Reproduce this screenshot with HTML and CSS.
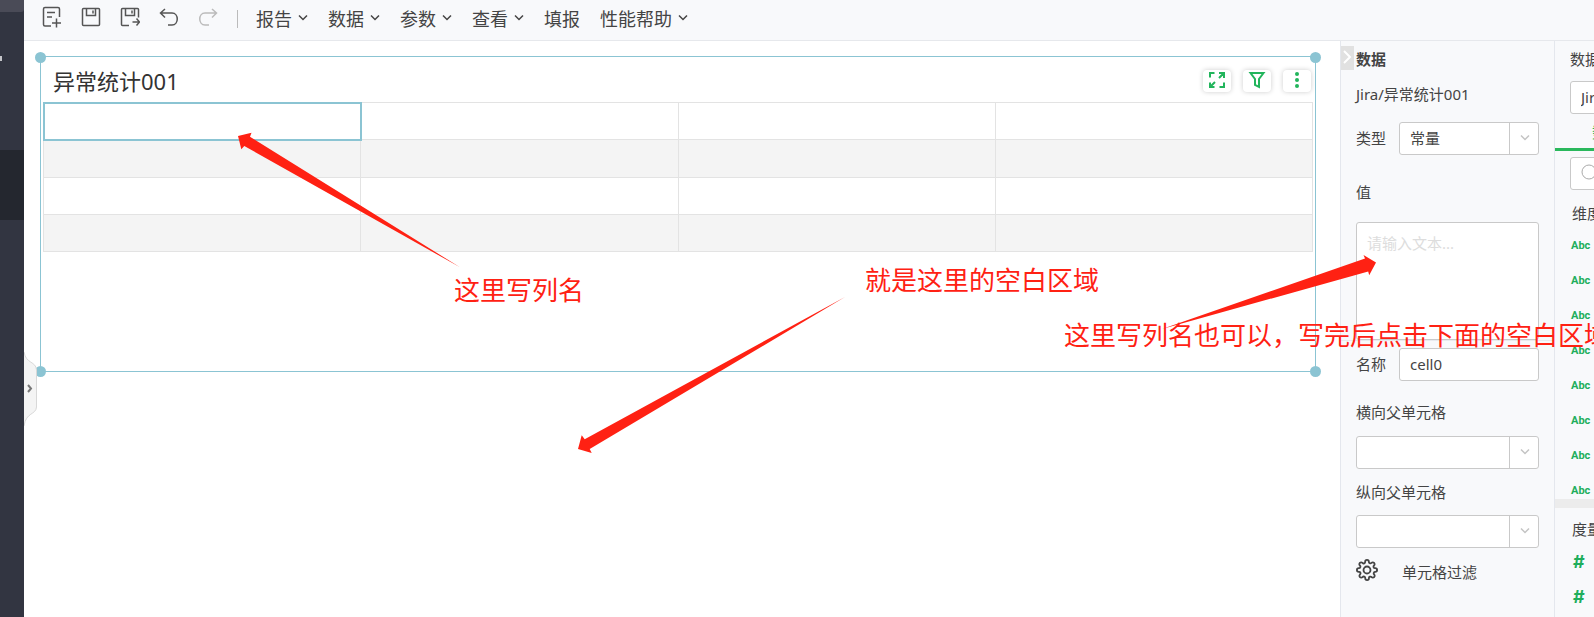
FILE: index.html
```html
<!DOCTYPE html>
<html lang="zh-CN">
  <head>
  <meta charset="utf-8">
  <title>异常统计001</title>
  <link rel="stylesheet" href="styles.css">
  </head>

  <body>
  <nav class="sidebar">
    <div class="sidebar-top"></div>
    <div class="sidebar-mark"></div>
    <div class="sidebar-active"></div>
  </nav>

  <div class="main">
    <header class="toolbar">
      <div class="tools">
        <button class="tool" aria-label="新建">
          <svg width="20" height="22" viewBox="0 0 20 22"><path d="M17.500 11V3q0-1.500-1.500-1.500H3Q1.500 1.500 1.500 3v15.500Q1.500 20 3 20H9M5 6.500h8M5 11h5M14.500 12.500v9M10 17h9"/></svg>
        </button>
        <button class="tool" aria-label="保存">
          <svg width="20" height="22" viewBox="0 0 20 22"><path d="M2.500 2.500h15q1 0 1 1v15q0 1-1 1h-15q-1 0-1-1v-15q0-1 1-1zM5.500 2.500v7h9v-7M12 4.500v3"/></svg>
        </button>
        <button class="tool" aria-label="另存为">
          <svg width="20" height="22" viewBox="0 0 20 22"><path d="M9 19.500H2.500q-1 0-1-1v-15q0-1 1-1h15q1 0 1 1v8M5.500 2.500v7h9v-7M12 4.500v3M12.500 16h7M16.500 12.500l3 3.500-3 3.500"/></svg>
        </button>
        <button class="tool" aria-label="撤销">
          <svg width="20" height="22" viewBox="0 0 20 22"><path d="M6 3L1.500 7 6 11.500M1.500 7H13c7 0 7 12 0 12H9"/></svg>
        </button>
        <button class="tool disabled" aria-label="重做">
          <svg width="20" height="22" viewBox="0 0 20 22"><path d="M14 3l4.500 4L14 11.500M18.500 7H7C0 7 0 19 7 19h4"/></svg>
        </button>
      </div>
      <div class="menus">
        <button class="menu">报告<svg class="caret" width="10" height="8" viewBox="0 0 10 8"><path d="M1 1.500l4 4 4-4"/></svg></button>
        <button class="menu">数据<svg class="caret" width="10" height="8" viewBox="0 0 10 8"><path d="M1 1.500l4 4 4-4"/></svg></button>
        <button class="menu">参数<svg class="caret" width="10" height="8" viewBox="0 0 10 8"><path d="M1 1.500l4 4 4-4"/></svg></button>
        <button class="menu">查看<svg class="caret" width="10" height="8" viewBox="0 0 10 8"><path d="M1 1.500l4 4 4-4"/></svg></button>
        <button class="menu">填报</button>
        <button class="menu">性能帮助<svg class="caret" width="10" height="8" viewBox="0 0 10 8"><path d="M1 1.500l4 4 4-4"/></svg></button>
      </div>
    </header>

    <div class="content">
      <main class="canvas">
        <section class="widget">
          <i class="handle tl"></i><i class="handle tr"></i><i class="handle bl"></i><i class="handle br"></i>
          <div class="widget-head">
            <h1>异常统计001</h1>
            <div class="actions">
              <button class="action" aria-label="全屏">
                <svg width="18" height="18" viewBox="0 0 18 18"><path d="M6.500 2H2v4.500M2 11.500V16h4.500M11.500 16H16v-4.500M11 2h5v5M16 2l-5 5M7 11l-5 5" /></svg>
              </button>
              <button class="action" aria-label="筛选">
                <svg width="18" height="18" viewBox="0 0 18 18"><path d="M2.500 2h13L11 8v8l-4-2V8z"/></svg>
              </button>
              <button class="action" aria-label="更多">
                <svg width="18" height="18" viewBox="0 0 18 18"><g class="dots"><circle cx="9" cy="3" r="2"/><circle cx="9" cy="9" r="2"/><circle cx="9" cy="15" r="2"/></g></svg>
              </button>
            </div>
          </div>
          <table class="grid">
            <tr><td class="selected"></td><td></td><td></td><td></td></tr>
            <tr><td></td><td></td><td></td><td></td></tr>
            <tr><td></td><td></td><td></td><td></td></tr>
            <tr><td></td><td></td><td></td><td></td></tr>
          </table>
        </section>
        <button class="drawer" aria-label="展开">
          <svg width="14" height="76" viewBox="0 0 14 76"><path class="shape" d="M0 1C2 13 12 10 12.500 19v37C12 64 2 61 0 75"/><path class="arrow" d="M4 34l3 3.500L4 41"/></svg>
        </button>
      </main>

      <aside class="panel props">
        <button class="collapse" aria-label="收起">
          <svg width="13" height="24" viewBox="0 0 13 24"><path d="M3 5l6 6-6 6"/></svg>
        </button>
        <h2>数据</h2>
        <p class="source">Jira/异常统计001</p>
        <div class="row">
          <label for="type">类型</label>
          <div class="select">
            <select id="type"><option>常量</option></select>
            <svg class="caret" width="10" height="8" viewBox="0 0 10 8"><path d="M1 1.500l4 4 4-4"/></svg>
          </div>
        </div>
        <label class="value-label" for="value">值</label>
        <textarea id="value" placeholder="请输入文本..."></textarea>
        <div class="row name-row">
          <label for="name">名称</label>
          <input id="name" type="text" value="cell0">
        </div>
        <label class="parent-label" for="row-parent">横向父单元格</label>
        <div class="select">
          <select id="row-parent"><option></option></select>
          <svg class="caret" width="10" height="8" viewBox="0 0 10 8"><path d="M1 1.500l4 4 4-4"/></svg>
        </div>
        <label class="parent-label second" for="col-parent">纵向父单元格</label>
        <div class="select">
          <select id="col-parent"><option></option></select>
          <svg class="caret" width="10" height="8" viewBox="0 0 10 8"><path d="M1 1.500l4 4 4-4"/></svg>
        </div>
        <button class="filter">
          <svg width="22" height="22" viewBox="0 0 24 24"><circle cx="12" cy="12" r="3.800"/><path d="M19.400 15a1.650 1.650 0 0 0 .33 1.820l.06.06a2 2 0 1 1-2.830 2.830l-.06-.06a1.650 1.650 0 0 0-2.800 1.170V21a2 2 0 0 1-4 0v-.09a1.650 1.650 0 0 0-2.900-1.180l-.06.06a2 2 0 1 1-2.830-2.830l.06-.06A1.650 1.650 0 0 0 3.090 14H3a2 2 0 0 1 0-4h.09a1.650 1.650 0 0 0 1.180-2.900l-.06-.06a2 2 0 1 1 2.830-2.830l.06.06A1.650 1.650 0 0 0 10 3.090V3a2 2 0 0 1 4 0v.09a1.650 1.650 0 0 0 2.820 1.180l.06-.06a2 2 0 1 1 2.830 2.830l-.06.06A1.650 1.650 0 0 0 20.910 10H21a2 2 0 0 1 0 4h-.09a1.650 1.650 0 0 0-1.510 1z"/></svg>
          单元格过滤
        </button>
      </aside>

      <aside class="panel dataset">
        <div class="dataset-body">
          <label class="dataset-label" for="dataset">数据集</label>
          <select id="dataset"><option>Jira</option></select>
          <div class="tab">数据</div>
          <div class="search">
            <svg width="18" height="18" viewBox="0 0 18 18"><circle cx="8" cy="8" r="7"/><path d="M13 13l4 4"/></svg>
          </div>
          <h3>维度</h3>
          <ul class="fields">
            <li>Abc</li><li>Abc</li><li>Abc</li><li>Abc</li>
            <li>Abc</li><li>Abc</li><li>Abc</li><li>Abc</li>
          </ul>
          <div class="split"></div>
          <h3>度量</h3>
          <ul class="measures"><li>#</li><li>#</li></ul>
        </div>
      </aside>
    </div>
  </div>

  <!-- red notes on top of the editor -->
  <div class="notes">
    <svg width="1594" height="617" viewBox="0 0 1594 617">
      <path d="M238 136l13.500-3.300-1.500 4L460 267.300 244.300 146l-3 3.300z"/>
      <path d="M578 449l3.700-13.700 3 4L845 297 589.700 449l2 4z"/>
      <path d="M1376 262.500l-12.500-7.400 1.500 3.400L1162 329l206.200-57.500 1 3.800z"/>
    </svg>
    <span class="note column">这里写列名</span>
    <span class="note blank">就是这里的空白区域</span>
    <span class="note input">这里写列名也可以，写完后点击下面的空白区域</span>
  </div>
  </body>
</html>
```
FILE: styles.css
```css
* {
  box-sizing: border-box;
}

body {
  margin: 0;
  display: flex;
  min-height: 100vh;
  position: relative;
  overflow: hidden;
  background: #fff;
  color: #444;
  font: 15px/24px "Noto Sans", "Noto Sans CJK SC", sans-serif;
}

h1, h2, h3, p, ul {
  margin: 0;
  padding: 0;
}

button {
  border: 0;
  padding: 0;
  background: none;
  color: inherit;
  font: inherit;
}

svg {
  display: block;
  fill: none;
  stroke: currentColor;
}

/* left navigation */
.sidebar {
  width: 24px;
  flex: none;
  background: #323541;
}

.sidebar-top {
  height: 12px;
  background: #4a4b57;
  border-radius: 0 0 3px 0;
}

.sidebar-mark {
  width: 2px;
  height: 5px;
  margin-top: 44px;
  background: #c4c5c9;
}

.sidebar-active {
  height: 70px;
  margin-top: 89px;
  background: #24272f;
}

.main {
  flex: 1;
  min-width: 0;
  display: flex;
  flex-direction: column;
}

/* toolbar */
.toolbar {
  display: flex;
  height: 41px;
  background: #f8f9fb;
  border-bottom: 1px solid #e6e8ec;
}

.tools {
  display: flex;
  gap: 19px;
  height: 18px;
  margin: 10px 0 0 18px;
  padding-right: 19px;
  border-right: 1px solid #bbb;
  align-items: center;
  color: #555;
}

.tool {
  width: 20px;
  margin-bottom: 4px;
}

.tool svg {
  stroke-width: 1.5;
}

.disabled {
  color: #bbb;
}

.menus {
  display: flex;
  gap: 20px;
  padding: 0 0 2px 18px;
  font-size: 18px;
}

.menu {
  display: flex;
  align-items: center;
}

.caret {
  margin: 0 0 3px 6px;
  stroke-width: 1.5;
}

.content {
  flex: 1;
  display: flex;
}

/* report canvas */
.canvas {
  flex: 1;
  min-width: 0;
  position: relative;
  padding: 15px 24px 0 16px;
}

.widget {
  position: relative;
  height: 316px;
  border: 1px solid #8bc4d3;
  padding: 0 2px;
}

.handle {
  position: absolute;
  width: 11px;
  height: 11px;
  border-radius: 50%;
  background: #8bc4d3;
}

.tl { left: -6px; top: -5px; }
.tr { right: -6px; top: -5px; }
.bl { left: -6px; bottom: -6px; }
.br { right: -6px; bottom: -6px; }

.widget-head {
  display: flex;
  justify-content: space-between;
  height: 45px;
  padding: 0 2px 0 10px;
}

h1 {
  font-size: 22px;
  font-weight: 400;
  line-height: 48px;
  color: #333;
}

.actions {
  display: flex;
  gap: 12px;
  padding-top: 13px;
}

.action {
  width: 28px;
  height: 22px;
  border-radius: 4px;
  background: #fff;
  box-shadow: 0 0 5px rgba(0, 0, 0, .2);
  color: #22b55c;
}

.action svg {
  margin: -3px auto 0;
  stroke-width: 2;
}

.dots {
  fill: currentColor;
  stroke: none;
}

.grid {
  width: 100%;
  height: 150px;
  table-layout: fixed;
  border-collapse: collapse;
}

.grid td {
  padding: 0;
  border: 1px solid #e3e3e3;
}

.grid tr:nth-child(even) {
  background: #f4f4f4;
}

.grid .selected {
  outline: 2px solid #8bc4d3;
  outline-offset: -1px;
}

.drawer {
  position: absolute;
  left: 0;
  top: 310px;
}

.drawer .shape {
  fill: #f4f4f4;
  stroke: #d8d8d8;
}

.drawer .arrow {
  stroke: #777;
  stroke-width: 2;
}

/* right panels */
.panel {
  flex: none;
  background: #f8f9fb;
  border-left: 1px solid #e4e7ed;
}

.props {
  position: relative;
  width: 214px;
  padding: 6px 15px 0;
}

.collapse {
  position: absolute;
  left: 0;
  top: 5px;
  background: #e1e1e1;
  color: #fff;
}

.collapse svg {
  stroke-width: 2;
}

h2 {
  font-size: 15px;
}

.source {
  margin: 11px 0 16px;
}

.row {
  display: flex;
  align-items: center;
  justify-content: space-between;
}

.row label {
  padding-bottom: 2px;
}

.row .select, .row input {
  width: 140px;
}

input, textarea, select {
  display: block;
  width: 100%;
  height: 33px;
  margin: 0;
  padding: 0 10px 1px;
  border: 1px solid #c9c9c9;
  border-radius: 3px;
  background: #fff;
  color: #444;
  font: inherit;
  appearance: none;
}

.select {
  position: relative;
}

.select::after {
  content: "";
  position: absolute;
  right: 29px;
  top: 0;
  bottom: 0;
  border-left: 1px solid #c9c9c9;
}

.select .caret {
  position: absolute;
  right: 9px;
  top: 12px;
  margin: 0;
  color: #c4c4c4;
}

.value-label {
  display: block;
  margin: 25px 0 18px;
}

textarea {
  height: 118px;
  padding-top: 8px;
  resize: none;
}

textarea::placeholder {
  color: #ddd;
}

.name-row {
  margin: 0 -15px;
  padding: 7px 15px 0;
  border-top: 1px solid #e8eaee;
}

.parent-label {
  display: block;
  margin: 19px 0 12px;
}

.second {
  margin: 11px 0;
}

.filter {
  display: flex;
  gap: 24px;
  margin-top: 12px;
}

.filter svg {
  stroke-width: 2;
  margin-top: -1px;
}

.dataset {
  width: 40px;
  overflow: hidden;
}

.dataset-body {
  width: 216px;
  padding-top: 6px;
}

.dataset-label {
  display: block;
  padding-left: 15px;
}

.dataset select, .search {
  width: 186px;
  margin: 10px 15px 0;
}

.tab {
  height: 37px;
  padding-left: 37px;
  line-height: 37px;
  border-bottom: 3px solid #2ab85c;
  color: #22b55c;
}

.search {
  height: 33px;
  margin-top: 6px;
  padding: 6px 10px;
  border: 1px solid #c9c9c9;
  border-radius: 3px;
  background: #fff;
  color: #aaa;
}

h3 {
  margin: 11px 0 3px;
  padding-left: 17px;
  font-size: 15px;
  font-weight: 400;
}

.fields, .measures {
  list-style: none;
  padding-left: 16px;
  color: #1fae5c;
  font: 700 11px/35px Roboto, sans-serif;
}

.fields {
  height: 271px;
  overflow: hidden;
}

.measures {
  padding-left: 18px;
  font: 700 18px/35px Inter, sans-serif;
}

.split {
  height: 9px;
  background: #ececec;
}

.split + h3 {
  margin-top: 9px;
}

/* annotations */
.notes {
  position: absolute;
  left: 0;
  top: 0;
  pointer-events: none;
  color: #ff2113;
  font-size: 26px;
  line-height: 40px;
}

.notes svg {
  fill: currentColor;
  stroke: none;
}

.note {
  position: absolute;
  white-space: nowrap;
}

.column { left: 454px; top: 270px; }
.blank { left: 865px; top: 260px; }
.input { left: 1064px; top: 315px; }
```
